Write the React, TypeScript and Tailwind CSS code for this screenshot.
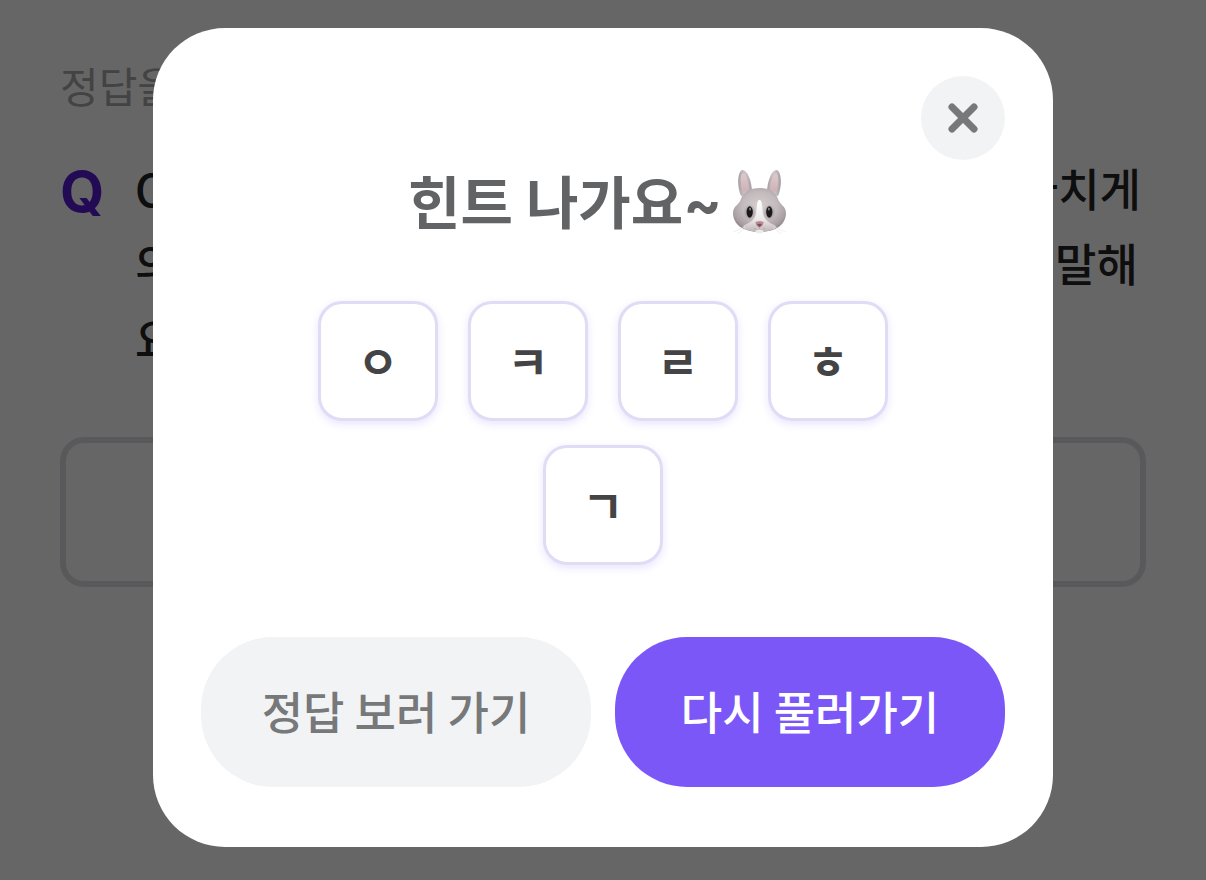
import React, { useState } from "react";

const HINTS = ["ㅇ", "ㅋ", "ㄹ", "ㅎ", "ㄱ"];

const RabbitFace: React.FC = () => (
  <svg viewBox="0 0 60 72" className="h-[72px] w-[60px] shrink-0" role="img" aria-label="토끼">
    <defs>
      <radialGradient id="fur" cx="50%" cy="42%" r="60%">
        <stop offset="0%" stopColor="#d6d0d1" />
        <stop offset="55%" stopColor="#c2babc" />
        <stop offset="85%" stopColor="#a89fa2" />
        <stop offset="100%" stopColor="#8d8388" />
      </radialGradient>
      <linearGradient id="ear" x1="0" x2="1" y1="0" y2="0">
        <stop offset="0%" stopColor="#a59da0" />
        <stop offset="50%" stopColor="#d0c8ca" />
        <stop offset="100%" stopColor="#a39a9e" />
      </linearGradient>
      <linearGradient id="innerEar" x1="0" x2="0" y1="0" y2="1">
        <stop offset="0%" stopColor="#dccbcd" />
        <stop offset="100%" stopColor="#d0b0b6" />
      </linearGradient>
      <radialGradient id="shade">
        <stop offset="0%" stopColor="#766b70" stopOpacity="0.8" />
        <stop offset="100%" stopColor="#766b70" stopOpacity="0" />
      </radialGradient>
      <linearGradient id="muzzle" x1="0" x2="0" y1="0" y2="1">
        <stop offset="0%" stopColor="#ffffff" />
        <stop offset="60%" stopColor="#eeeaea" />
        <stop offset="100%" stopColor="#bdb4b6" />
      </linearGradient>
    </defs>
    <path d="M11 30C7 21 7 7 12 4C17 3 22 15 22 27Z" fill="url(#ear)" />
    <path d="M48 30C52 21 52 7 47 4C42 3 37 15 37 27Z" fill="url(#ear)" />
    <path d="M13 26C10 19 10 9 12.5 7C16 8 19 17 19 25Z" fill="url(#innerEar)" />
    <path d="M46 26C49 19 49 9 46.5 7C43 8 40 17 40 25Z" fill="url(#innerEar)" />
    <path
      d="M29.5 22C20 22 13 26 11 33C9 39 3 40 3 47C3 54 7 60 14 63C19 65 24 66 29.5 66C35 66 40 65 45 63C52 60 56 54 56 47C56 40 50 39 48 33C46 26 39 22 29.5 22Z"
      fill="url(#fur)"
    />
    <path
      d="M29.5 34C32.5 34 32 42 33 48C34 54 40 57 46 60C44 63 42 64 40 64.5Q29.5 67 19 64.5C17 64 15 63 13 60C19 57 25 54 26 48C27 42 26.5 34 29.5 34Z"
      fill="url(#muzzle)"
    />
    <ellipse cx="19.7" cy="46" rx="6" ry="8" fill="url(#shade)" />
    <ellipse cx="39.3" cy="46" rx="6" ry="8" fill="url(#shade)" />
    <ellipse cx="19.7" cy="46" rx="3.1" ry="5.8" fill="#1b1919" />
    <ellipse cx="39.3" cy="46" rx="3.1" ry="5.8" fill="#1b1919" />
    <ellipse cx="20.1" cy="43" rx="1" ry="1.5" fill="#85807f" />
    <ellipse cx="38.9" cy="43" rx="1" ry="1.5" fill="#85807f" />
    <ellipse cx="29.5" cy="65" rx="4" ry="2.5" fill="#eeeaea" />
    <path d="M25.5 56C27.5 55 31.5 55 33.5 56C33.5 59 31.5 61 29.5 61.5C27.5 61 25.5 59 25.5 56Z" fill="#b98790" />
    <path d="M27 58.5Q29.5 57 32 58.5L29.5 61Z" fill="#7d4c54" />
    <path d="M29.5 61V63M24 62.5Q27.5 65 29.5 63Q31.5 65 35 62.5" stroke="#a89da0" strokeWidth="0.7" fill="none" />
    <path d="M15 61L3 66M16 62L7 68M44 61L56 66M43 62L52 68" stroke="#efebeb" strokeWidth="0.8" />
  </svg>
);

const App: React.FC = () => {
  const [answer, setAnswer] = useState("");
  const [showHint, setShowHint] = useState(true);

  return (
    <div className="min-h-screen bg-white font-['Noto_Sans_CJK_KR',sans-serif]">
      <main className="px-[60px] pt-[52px]">
        <label htmlFor="answer" className="block text-[42px] leading-[66px] text-[#a8a8aa]">
          정답을 입력해 주세요
        </label>
        <div className="mt-8 flex gap-8">
          <span className="w-[43px] shrink-0 pt-1 font-['Inter','Noto_Sans_CJK_KR',sans-serif] text-[57px] leading-[75px] font-bold text-[#571bd5]">
            Q
          </span>
          <p className="text-[45px] leading-[75px] font-medium text-[#252527]">
            OOO OO는 어떤 값을 정할 때 처음 본 정보에 지나치게 의존하여 이후의 합리적인 판단까지도 어려워짐을 말해요
          </p>
        </div>
        <input
          id="answer"
          type="text"
          value={answer}
          onChange={(e) => setAnswer(e.target.value)}
          className="mt-[62px] h-[150px] w-full rounded-3xl border-[6px] border-[#dfdfe3] px-8 text-[45px] outline-none"
        />
      </main>

      {showHint && (
        <div className="fixed inset-0 z-50 flex items-start justify-center bg-black/60 pt-7">
          <div
            role="dialog"
            aria-modal="true"
            aria-labelledby="hint-title"
            className="flex w-full max-w-[900px] flex-col rounded-[72px] bg-white px-12 pt-12 pb-[60px]"
          >
            <button
              type="button"
              onClick={() => setShowHint(false)}
              aria-label="닫기"
              className="flex size-[84px] items-center justify-center self-end rounded-full bg-[#f2f3f5]"
            >
              <svg viewBox="0 0 30 30" className="size-[30px]" fill="none" stroke="#77787a" strokeWidth="7" strokeLinecap="round">
                <path d="M4 4L26 26M26 4L4 26" />
              </svg>
            </button>
            <div className="flex items-center justify-center gap-2 pr-2">
              <h2 id="hint-title" className="pb-1.5 text-[57px] leading-[78px] font-bold text-[#626365]">
                힌트 나가요<span className="font-['Inter',sans-serif] leading-none">~</span>
              </h2>
              <RabbitFace />
            </div>
            <ul className="mt-[57px] flex flex-wrap justify-center gap-x-[30px] gap-y-6 px-[90px]">
              {HINTS.map((hint) => (
                <li
                  key={hint}
                  className="flex size-[120px] items-center justify-center rounded-3xl border-[3px] border-[#dfdcf6] bg-white text-[45px] leading-[66px] font-bold text-[#444446] shadow-[0_3px_9px_rgba(122,88,246,0.16)]"
                >
                  {hint}
                </li>
              ))}
            </ul>
            <div className="mt-[72px] flex gap-6">
              <button
                type="button"
                className="h-[150px] flex-1 rounded-[72px] bg-[#f2f3f5] pb-0.5 text-[45px] font-medium text-[#77787a]"
              >
                정답 보러 가기
              </button>
              <button
                type="button"
                onClick={() => setShowHint(false)}
                className="h-[150px] flex-1 rounded-[72px] bg-[#7b57f7] pb-0.5 text-[45px] font-medium text-white"
              >
                다시 풀러가기
              </button>
            </div>
          </div>
        </div>
      )}
    </div>
  );
};

export default App;
